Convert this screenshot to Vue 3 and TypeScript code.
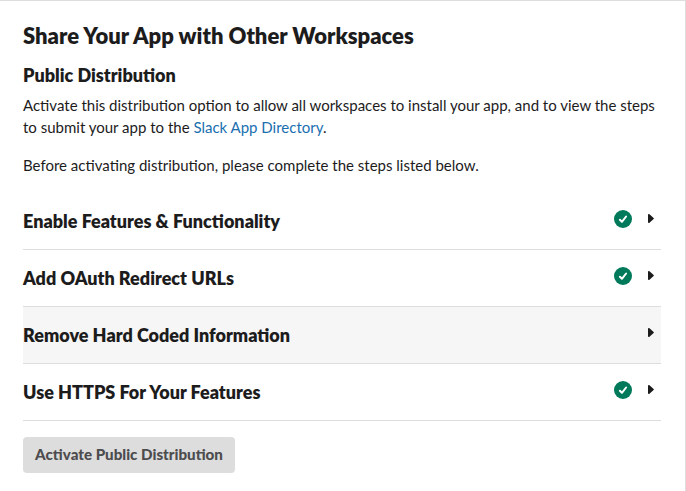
<script setup lang="ts">
interface Step { title: string; done: boolean; active: boolean }
const steps: Step[] = [
  { title: 'Enable Features & Functionality', done: true, active: false },
  { title: 'Add OAuth Redirect URLs', done: true, active: false },
  { title: 'Remove Hard Coded Information', done: false, active: true },
  { title: 'Use HTTPS For Your Features', done: true, active: false },
]
</script>

<template>
  <main class="card">
    <h1>Share Your App with Other Workspaces</h1>
    <h2>Public Distribution</h2>
    <p>Activate this distribution option to allow all workspaces to install your app, and to view the steps to submit your app to the <a>Slack App Directory</a>.</p>
    <p class="note">Before activating distribution, please complete the steps listed below.</p>
    <ul class="steps">
      <li v-for="s in steps" :key="s.title" class="step" :class="{ active: s.active }">
        <h3>{{ s.title }}</h3>
        <svg v-if="s.done" class="check" viewBox="0 0 18 18"><circle cx="9" cy="9" r="9" fill="#007a5a" /><path d="M5.9 9.8 7.9 11.8 12.1 6.5" fill="none" stroke="#fff" stroke-width="2" stroke-linecap="round" stroke-linejoin="round" /></svg>
        <svg class="caret" viewBox="0 0 6 9"><path d="M0 .7Q0 0 .8 0Q1.2 0 1.5.3L5.6 3.9Q6.2 4.5 5.6 5.1L1.5 8.7Q1.2 9 .8 9Q0 9 0 8.3Z" fill="#1d1c1d" /></svg>
      </li>
    </ul>
    <button disabled>Activate Public Distribution</button>
  </main>
</template>

<style>
body { background: #fff; }
</style>
<style scoped>
.card { box-sizing: border-box; width: 686px; height: 491px; padding: 20px 24px 0 23px; border-top: 1px solid #ddd; border-right: 1px solid #ddd; font-family: Lato, sans-serif; color: #1d1c1d; overflow: hidden; }
h1, h2, h3, p, ul { margin: 0; padding: 0; }
h1 { font-size: 22px; line-height: 30px; font-weight: 800; }
h2 { font-size: 18px; line-height: 24px; margin-top: 12px; font-weight: 800; }
p { font-size: 15px; line-height: 22px; margin-top: 7px; }
a { color: #1a6fb0; }
.note { margin-top: 16px; }
.steps { list-style: none; margin-top: 17px; }
.step { box-sizing: border-box; height: 57px; display: flex; align-items: center; border-bottom: 1px solid #ddd; padding-right: 7px; }
.active { background: #f6f6f6; }
h3 { flex: 1; font-size: 18px; line-height: 24px; font-weight: 800; }
.check { width: 18px; height: 18px; margin: 0 16px 5px 0; }
.caret { width: 6px; height: 9px; margin-bottom: 5px; }
button { display: block; box-sizing: border-box; width: 212px; height: 36px; margin-top: 16px; padding: 0 0 2px; border: 0; border-radius: 4px; background: #ddd; color: #4c4b4d; font: 900 15.15px Lato, sans-serif; }
</style>
